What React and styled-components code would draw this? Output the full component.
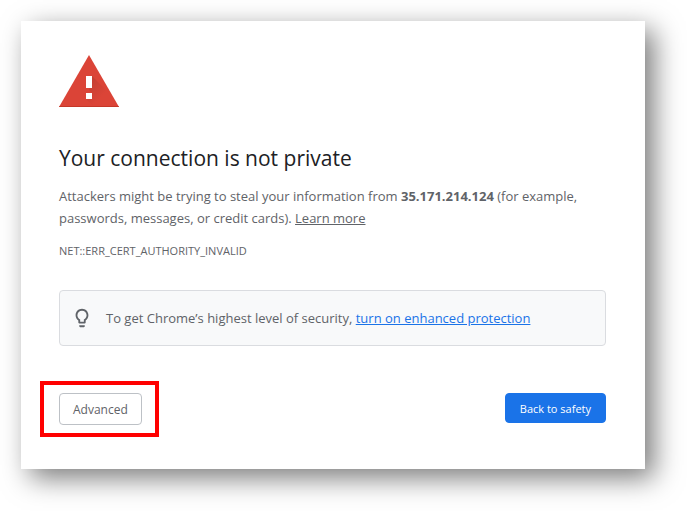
import styled, { createGlobalStyle } from "styled-components";

const GlobalStyle = createGlobalStyle`
  * {
    box-sizing: border-box;
  }

  body {
    margin: 0;
    background: #fff;
    color: #5f6368;
    font-family: "Open Sans", "Noto Sans", sans-serif;
    font-size: 13px;
  }
`;

const Page = styled.div`
  padding: 21px 42px 42px 21px;
`;

const Card = styled.main`
  padding: 34px 39px 32px 38px;
  background: #fff;
  box-shadow: 9px 9px 26px rgba(0, 0, 0, 0.52);
`;

const WarningIcon = styled.svg`
  display: block;
  width: 60px;
  height: 52px;
`;

const Title = styled.h1`
  margin: 36px 0 12px;
  color: #202124;
  font-size: 21px;
  font-weight: 400;
  line-height: 30px;
`;

const Message = styled.p`
  margin: 0;
  line-height: 22px;
`;

const LearnMore = styled.a`
  color: inherit;
`;

const ErrorCode = styled.div`
  margin-top: 14px;
  font-size: 11px;
  line-height: 16px;
`;

const Promo = styled.div`
  display: flex;
  align-items: center;
  gap: 13px;
  margin-top: 31px;
  padding: 16px 11px;
  border: 1px solid #dadce0;
  border-radius: 4px;
  background: #f8f9fa;
  line-height: 22px;
`;

const BulbIcon = styled.svg`
  flex: none;
  width: 22px;
  height: 22px;
  fill: #5f6368;
`;

const PromoLink = styled.a`
  color: #1a73e8;
`;

const Actions = styled.div`
  display: flex;
  justify-content: space-between;
  align-items: flex-start;
  margin: 35px 0 0 -19px;
`;

const Highlight = styled.div`
  padding: 8px 13px 8px 15px;
  border: 4px solid #f00;
`;

const Button = styled.button`
  height: ${({ $primary }) => ($primary ? "30px" : "32px")};
  margin-top: ${({ $primary }) => ($primary ? "12px" : "0")};
  padding: 0 ${({ $primary }) => ($primary ? "14px" : "13px")};
  border: 1px solid ${({ $primary }) => ($primary ? "#1a73e8" : "#bdc1c6")};
  border-radius: 4px;
  background: ${({ $primary }) => ($primary ? "#1a73e8" : "#fff")};
  color: ${({ $primary }) => ($primary ? "#fff" : "#5f6368")};
  font-family: inherit;
  font-size: ${({ $primary }) => ($primary ? "11px" : "12px")};
  font-weight: ${({ $primary }) => ($primary ? "500" : "400")};
  cursor: pointer;
`;

const App = () => {
  return (
    <>
      <GlobalStyle />
      <Page>
        <Card>
          <WarningIcon viewBox="0 0 60 52" aria-hidden="true">
            <defs>
              <linearGradient id="glyphShade" x1="0" y1="0" x2="1" y2="1">
                <stop offset="0" stopColor="#bd3d31" />
                <stop offset="0.6" stopColor="#db4437" />
              </linearGradient>
            </defs>
            <path d="M30 0 60 52H0z" fill="#db4437" />
            <path d="M33 21 46 34 56 52H35L27 44l6-6-3-3z" fill="url(#glyphShade)" />
            <path d="M0.500 51H59.500L60 52H0z" fill="#c53727" />
            <path d="M27 21h6v12h-6zM27 38h6v6h-6z" fill="#fff" />
          </WarningIcon>
          <Title>Your connection is not private</Title>
          <Message>
            Attackers might be trying to steal your information from{" "}
            <strong>35.171.214.124</strong> (for example, passwords, messages,
            or credit cards). <LearnMore href="#">Learn more</LearnMore>
          </Message>
          <ErrorCode>NET::ERR_CERT_AUTHORITY_INVALID</ErrorCode>
          <Promo>
            <BulbIcon viewBox="0 0 24 24" aria-hidden="true">
              <path d="M9 21c0 .5.400 1 1 1h4c.6 0 1-.5 1-1v-1H9v1zm3-19C8.100 2 5 5.100 5 9c0 2.400 1.200 4.500 3 5.700V17c0 .5.400 1 1 1h6c.6 0 1-.5 1-1v-2.300c1.800-1.300 3-3.400 3-5.700 0-3.900-3.100-7-7-7zm2.900 11.100-.9.600V16h-4v-2.300l-.9-.6C7.800 12.200 7 10.600 7 9c0-2.800 2.200-5 5-5s5 2.200 5 5c0 1.600-.8 3.200-2.100 4.100z" />
            </BulbIcon>
            <span>
              To get Chrome’s highest level of security,{" "}
              <PromoLink href="#">turn on enhanced protection</PromoLink>
            </span>
          </Promo>
          <Actions>
            <Highlight>
              <Button type="button">Advanced</Button>
            </Highlight>
            <Button type="button" $primary>
              Back to safety
            </Button>
          </Actions>
        </Card>
      </Page>
    </>
  );
};

export default App;
